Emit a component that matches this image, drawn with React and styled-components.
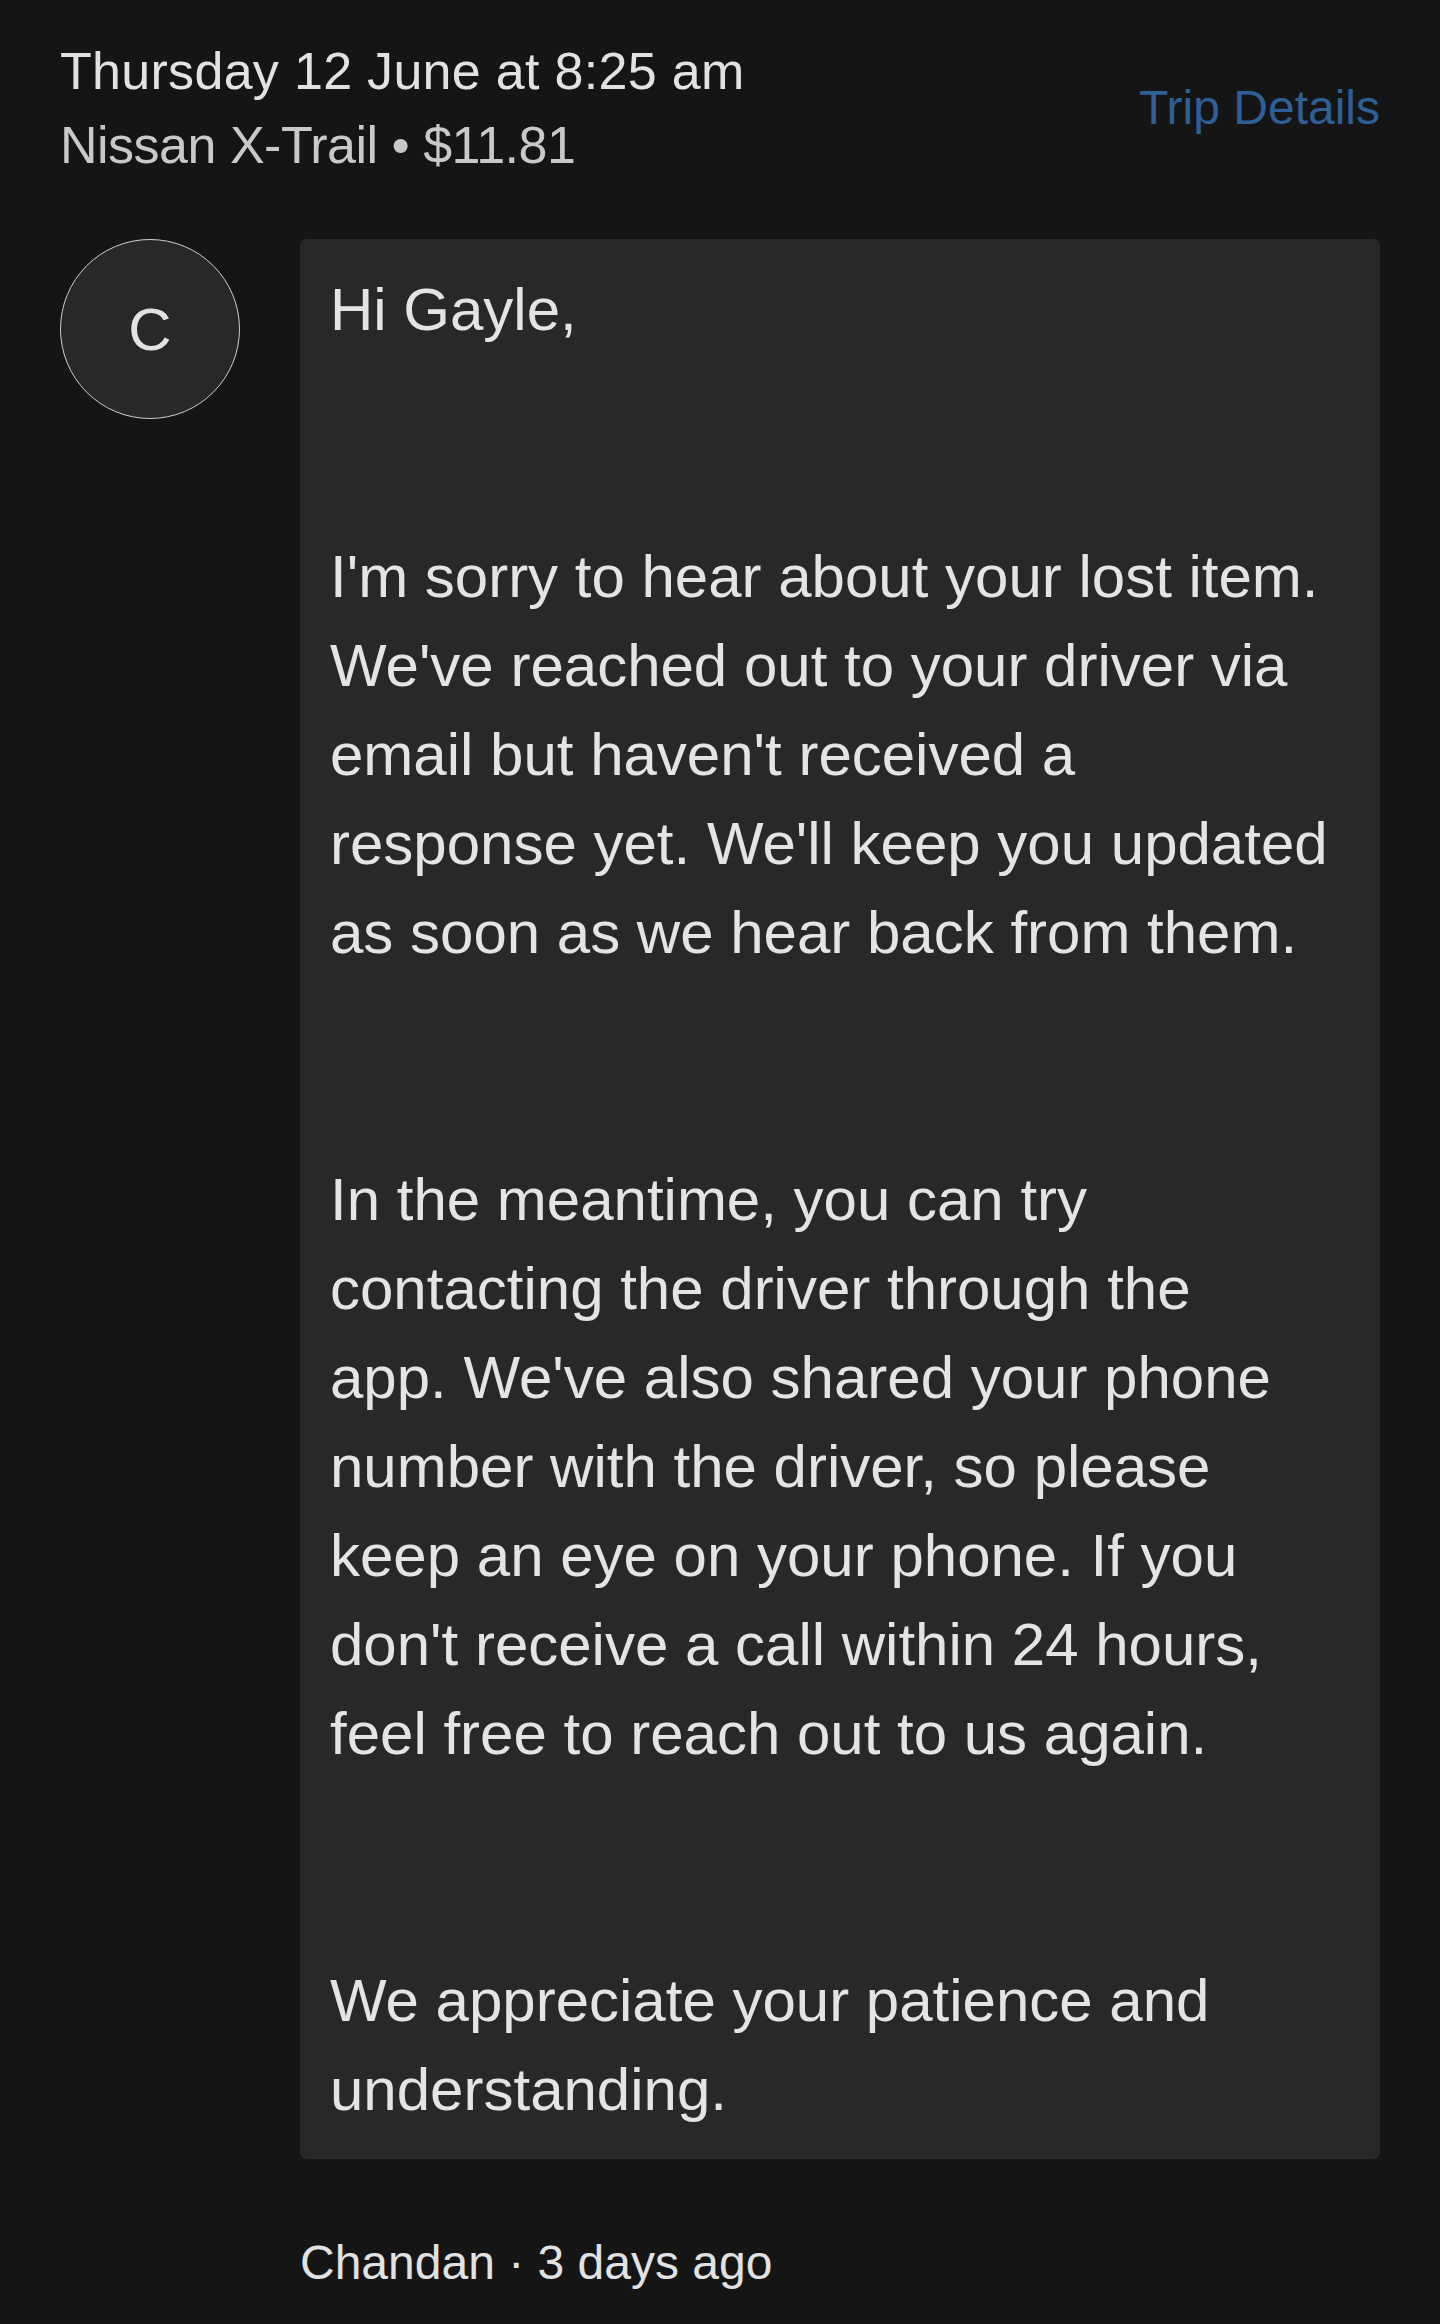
import styled, { createGlobalStyle } from "styled-components"

const GlobalStyle = createGlobalStyle`
    html, body {
        margin: 0;
        padding: 0;
        background-color: #151515;
    }
    body {
        font-family: "Liberation Sans", Arial, sans-serif;
        color: #e2e2e2;
    }
`

const Page = styled.div`
    width: 1440px;
    min-height: 2324px;
    box-sizing: border-box;
    padding: 34px 60px 0 60px;
    background-color: #151515;
`

const Header = styled.div`
    display: flex;
    align-items: center;
    justify-content: space-between;
`

const TripInfo = styled.div`
    display: flex;
    flex-direction: column;
`

const DateLine = styled.div`
    font-size: 52px;
    line-height: 74px;
    color: #e2e2e2;
    letter-spacing: 0.3px;
`

const CarLine = styled.div`
    font-size: 52px;
    line-height: 74px;
    color: #c9c9c9;
    letter-spacing: -0.5px;
`

const TripLink = styled.a`
    font-size: 48px;
    line-height: 74px;
    color: #2f5f97;
    text-decoration: none;
    cursor: pointer;
`

const Thread = styled.div`
    display: flex;
    gap: 60px;
    margin-top: 57px;
`

const Avatar = styled.div`
    flex: 0 0 auto;
    width: 180px;
    height: 180px;
    box-sizing: border-box;
    border-radius: 50%;
    border: 1px solid #cfcfcf;
    background-color: #282828;
    display: flex;
    align-items: center;
    justify-content: center;
    font-size: 60px;
    color: #e2e2e2;
`

const Message = styled.div`
    flex: 1;
    display: flex;
    flex-direction: column;
`

const Bubble = styled.div`
    background-color: #282828;
    border-radius: 7px;
    padding: 26px 30px 25px 30px;
    font-size: 60px;
    line-height: 89px;
    color: #e4e4e4;
    white-space: pre-wrap;
`

const Meta = styled.div`
    margin-top: 67px;
    font-size: 48px;
    line-height: 74px;
    color: #e2e2e2;
`

// lines broken where the app breaks them
const paragraphs = [
    ["Hi Gayle,"],
    [
        "I'm sorry to hear about your lost item.",
        "We've reached out to your driver via",
        "email but haven't received a",
        "response yet. We'll keep you updated",
        "as soon as we hear back from them.",
    ],
    [
        "In the meantime, you can try",
        "contacting the driver through the",
        "app. We've also shared your phone",
        "number with the driver, so please",
        "keep an eye on your phone. If you",
        "don't receive a call within 24 hours,",
        "feel free to reach out to us again.",
    ],
    ["We appreciate your patience and", "understanding."],
]

const body = paragraphs.map((p) => p.join("\n")).join("\n\n\n")

const App = () => {
    return (
        <>
            <GlobalStyle />
            <Page>
                <Header>
                    <TripInfo>
                        <DateLine>Thursday 12 June at 8:25 am</DateLine>
                        <CarLine>Nissan X-Trail • $11.81</CarLine>
                    </TripInfo>
                    <TripLink>Trip Details</TripLink>
                </Header>
                <Thread>
                    <Avatar>C</Avatar>
                    <Message>
                        <Bubble>{body}</Bubble>
                        <Meta>Chandan · 3 days ago</Meta>
                    </Message>
                </Thread>
            </Page>
        </>
    )
}

export default App
